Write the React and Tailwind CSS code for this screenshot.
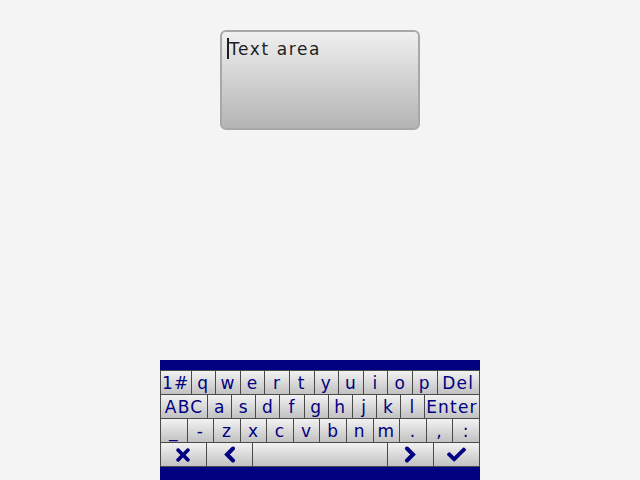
import React from "react";
import { FaTimes, FaCheck } from "react-icons/fa";

// key rows: [label, grow]
const rows = [
  [["1#", 5], ["q", 4], ["w", 4], ["e", 4], ["r", 4], ["t", 4], ["y", 4], ["u", 4], ["i", 4], ["o", 4], ["p", 4], ["Del", 7]],
  [["ABC", 6], ["a", 3], ["s", 3], ["d", 3], ["f", 3], ["g", 3], ["h", 3], ["j", 3], ["k", 3], ["l", 3], ["Enter", 7]],
  [["_", 1], ["-", 1], ["z", 1], ["x", 1], ["c", 1], ["v", 1], ["b", 1], ["n", 1], ["m", 1], [".", 1], [",", 1], [":", 1]],
  [["close", 2], ["left", 2], [" ", 6], ["right", 2], ["ok", 2]],
];

// bold chevron like the FontAwesome 4 glyph
const Chevron = ({ dir }) => (
  <svg width="13" height="17" viewBox="0 0 13 17" fill="none">
    <polyline
      points={dir === "left" ? "10,2.5 4,8.5 10,14.5" : "3,2.5 9,8.5 3,14.5"}
      stroke="#000080"
      strokeWidth="4"
      strokeLinecap="round"
      strokeLinejoin="miter"
    />
  </svg>
);

const icons = {
  close: <FaTimes className="w-[20px] h-[20px]" />,
  left: <Chevron dir="left" />,
  right: <Chevron dir="right" />,
  ok: <FaCheck className="w-[19px] h-[19px]" />,
};

const Key = ({ label, grow }) => (
  <div
    style={{ flexGrow: grow, flexBasis: 0 }}
    className="flex items-center justify-center h-[24px] border-r border-b border-[#4a4a4a] bg-gradient-to-b from-[#f2f2f2] to-[#c2c2c2] text-[#000080] text-[17px] tracking-[1.2px] leading-[24px] overflow-hidden"
  >
    {icons[label] || label}
  </div>
);

const App = () => {
  return (
    <div
      className="w-[640px] h-[480px] bg-[#f4f4f4] flex flex-col items-center overflow-hidden"
      style={{ fontFamily: '"DejaVu Sans", sans-serif' }}
    >
      {/* text area */}
      <div className="mt-[30px] w-[200px] h-[100px] rounded-[6px] border-2 border-[#a8a8a8] bg-gradient-to-b from-[#f0f0f0] to-[#b4b4b4] px-[5px] pt-[6px]">
        <div className="flex items-start text-[17px] tracking-[1.6px] text-[#1e1e1e] leading-[22px]">
          <span className="w-[2px] h-[21px] bg-[#1e1e1e]" />
          <span>Text area</span>
        </div>
      </div>

      {/* keyboard */}
      <div className="mt-auto w-[320px] h-[120px] bg-[#000080] pt-[10px] pb-[14px]">
        <div className="border-l border-t border-[#4a4a4a]">
          {rows.map((row, i) => (
            <div key={i} className="flex">
              {row.map(([label, grow], j) => (
                <Key key={j} label={label} grow={grow} />
              ))}
            </div>
          ))}
        </div>
      </div>
    </div>
  );
};

export default App;
